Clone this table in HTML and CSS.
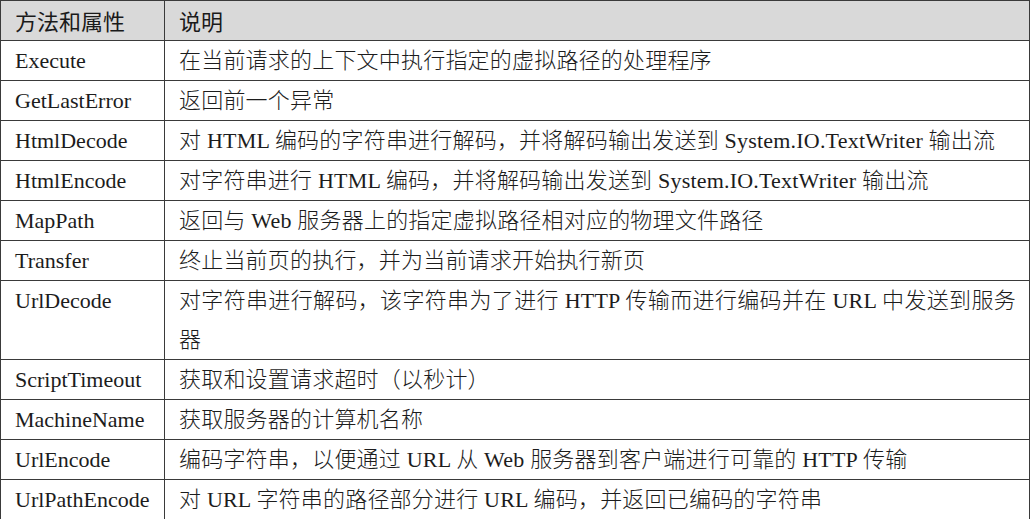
FILE: index.html
```html
<!DOCTYPE html>
<html lang="zh-CN">
<head>
<meta charset="utf-8">
<title>方法和属性</title>
<link rel="stylesheet" href="styles.css">
</head>
<body>
<table class="api">
  <thead>
    <tr><th class="name">方法和属性</th><th class="desc">说明</th></tr>
  </thead>
  <tbody>
    <tr><td class="name">Execute</td><td class="desc">在当前请求的上下文中执行指定的虚拟路径的处理程序</td></tr>
    <tr><td class="name">GetLastError</td><td class="desc">返回前一个异常</td></tr>
    <tr><td class="name">HtmlDecode</td><td class="desc">对 HTML 编码的字符串进行解码，并将解码输出发送到 System.IO.TextWriter 输出流</td></tr>
    <tr><td class="name">HtmlEncode</td><td class="desc">对字符串进行 HTML 编码，并将解码输出发送到 System.IO.TextWriter 输出流</td></tr>
    <tr><td class="name">MapPath</td><td class="desc">返回与 Web 服务器上的指定虚拟路径相对应的物理文件路径</td></tr>
    <tr><td class="name">Transfer</td><td class="desc">终止当前页的执行，并为当前请求开始执行新页</td></tr>
    <tr><td class="name">UrlDecode</td><td class="desc justify">对字符串进行解码，该字符串为了进行 HTTP 传输而进行编码并在 URL 中发送到服务器</td></tr>
    <tr><td class="name">ScriptTimeout</td><td class="desc">获取和设置请求超时（以秒计）</td></tr>
    <tr><td class="name">MachineName</td><td class="desc">获取服务器的计算机名称</td></tr>
    <tr><td class="name">UrlEncode</td><td class="desc">编码字符串，以便通过 URL 从 Web 服务器到客户端进行可靠的 HTTP 传输</td></tr>
    <tr><td class="name">UrlPathEncode</td><td class="desc">对 URL 字符串的路径部分进行 URL 编码，并返回已编码的字符串</td></tr>
  </tbody>
</table>
</body>
</html>
```
FILE: styles.css
```css
html, body {
  margin: 0;
  padding: 0;
  background: #ffffff;
}

.api {
  border-collapse: collapse;
  width: 1030px;
  table-layout: fixed;
  font-family: "Liberation Serif", "Noto Sans CJK SC", serif;
  font-size: 22px;
  color: #1c1c1c;
}

.api th,
.api td {
  border: 1px solid #3a3a3a;
  padding: 0 13px 0 14px;
  line-height: 39px;
  text-align: left;
  vertical-align: top;
  font-weight: normal;
}

.api th {
  background: #d9d9d9;
  font-family: "Noto Sans CJK SC", sans-serif;
  font-size: 22px;
  font-weight: 400;
  color: #1a1a1a;
}

.api .name {
  width: 164px;
  box-sizing: border-box;
}

.api td.desc {
  letter-spacing: 0.2px;
  font-weight: 300;
}

.api .justify {
  text-align: justify;
}
```
